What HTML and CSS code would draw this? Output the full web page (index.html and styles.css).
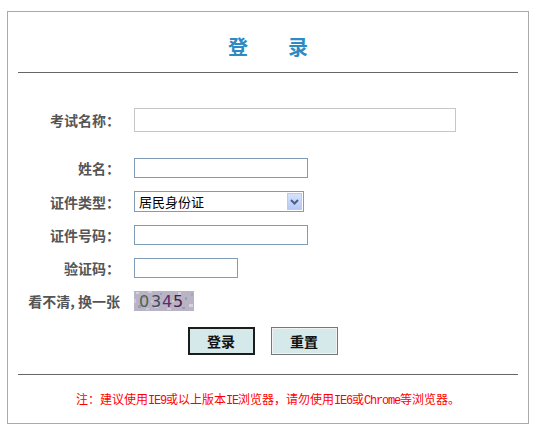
FILE: index.html
```html
<!DOCTYPE html>
<html lang="zh-CN">
<head>
    <meta charset="UTF-8">
    <meta name="viewport" content="width=device-width, initial-scale=1.0">
    <title>登录</title>
    <link rel="stylesheet" href="styles.css">
</head>
<body>
    <div class="login-box">
        <!-- 标题 -->
        <h2 class="title"><span>登</span><span>录</span></h2>
        <div class="line"></div>

        <form class="login-form" action="javascript:;">
            <div class="row row-exam">
                <label>考试名称：</label>
                <input class="ipt ipt-exam" type="text">
            </div>
            <div class="row">
                <label>姓名：</label>
                <input class="ipt ipt-long" type="text">
            </div>
            <div class="row">
                <label>证件类型：</label>
                <div class="select-wrap">
                    <select class="sel">
                        <option>居民身份证</option>
                        <option>护照</option>
                        <option>军官证</option>
                    </select>
                    <!-- 仿xp下拉按钮 -->
                    <span class="sel-btn">
                        <svg width="9" height="6" viewBox="0 0 9 6"><path d="M1 1 L4.5 4.5 L8 1" fill="none" stroke="#4d5f86" stroke-width="2"/></svg>
                    </span>
                </div>
            </div>
            <div class="row">
                <label>证件号码：</label>
                <input class="ipt ipt-long" type="text">
            </div>
            <div class="row">
                <label>验证码：</label>
                <input class="ipt ipt-code" type="text">
            </div>
            <div class="row">
                <label class="refresh">看不清, 换一张</label>
                <svg class="captcha" width="60" height="20" viewBox="0 0 60 20">
                    <rect width="60" height="20" fill="#b8b3c5"/>
                    <rect x="2" y="1" width="3" height="2" fill="#d6d1de"/>
                    <rect x="9" y="4" width="2" height="3" fill="#9d98ad"/>
                    <rect x="14" y="0" width="4" height="2" fill="#cfc9d8"/>
                    <rect x="21" y="15" width="3" height="2" fill="#d9d4e1"/>
                    <rect x="26" y="2" width="2" height="2" fill="#a39eb2"/>
                    <rect x="33" y="17" width="4" height="2" fill="#cec8d7"/>
                    <rect x="44" y="1" width="3" height="3" fill="#d4cedc"/>
                    <rect x="51" y="6" width="2" height="3" fill="#a19cb0"/>
                    <rect x="55" y="13" width="4" height="3" fill="#d7d2df"/>
                    <rect x="4" y="14" width="3" height="3" fill="#a09bb0"/>
                    <rect x="0" y="8" width="2" height="4" fill="#ccc6d6"/>
                    <rect x="48" y="16" width="3" height="2" fill="#9f9aae"/>
                    <rect x="38" y="9" width="2" height="2" fill="#d2ccdb"/>
                    <rect x="17" y="9" width="2" height="3" fill="#c9c3d3"/>
                    <rect x="57" y="2" width="2" height="3" fill="#a9a4b7"/>
                    <rect x="12" y="17" width="3" height="2" fill="#cdc7d6"/>
                    <text x="5" y="16" fill="#4d6650" font-family="DejaVu Sans, sans-serif" font-size="16">0</text>
                    <text x="17" y="16" fill="#3d4a5c" font-family="DejaVu Sans, sans-serif" font-size="16">3</text>
                    <text x="28" y="16" fill="#5b2a6b" font-family="DejaVu Sans, sans-serif" font-size="16">4</text>
                    <text x="39" y="16" fill="#47213f" font-family="DejaVu Sans, sans-serif" font-size="16">5</text>
                </svg>
            </div>
            <div class="btns">
                <button class="btn btn-active" type="submit">登录</button>
                <button class="btn" type="reset">重置</button>
            </div>
        </form>

        <div class="line line-bottom"></div>
        <p class="note">注：建议使用<span class="en">IE9</span>或以上版本<span class="en">IE</span>浏览器，请勿使用<span class="en">IE6</span>或<span class="en">Chrome</span>等浏览器。</p>
    </div>
</body>
</html>
```

FILE: styles.css
```css
body {
    margin: 0;
    padding: 0;
    background-color: #fff;
    font-family: "Noto Sans CJK SC", "Liberation Sans", sans-serif;
}
.login-box {
    margin: 11px 7px;
    width: 522px;
    box-sizing: border-box;
    border: 1px solid #aaa;
    padding: 23px 10px 14px;
}
.title {
    display: flex;
    justify-content: center;
    gap: 40px;
    margin: 0;
    font-size: 20px;
    line-height: 24px;
    font-weight: bold;
    color: #2b8bc2;
}
.line {
    margin-top: 13px;
    height: 1px;
    background-color: #666;
}
.login-form {
    margin: 35px 0 0;
    display: flex;
    flex-direction: column;
    gap: 13px;
}
.row {
    display: flex;
    align-items: center;
}
.row-exam {
    margin-bottom: 13px;
}
.row label {
    width: 102px;
    margin-right: 14px;
    text-align: right;
    white-space: nowrap;
    font-size: 14px;
    line-height: 20px;
    font-weight: bold;
    color: #555;
}
.ipt {
    box-sizing: border-box;
    height: 20px;
    margin: 0;
    padding: 1px 3px;
    border: 1px solid #7f9db9;
    font-size: 13px;
    outline: none;
}
.ipt-exam {
    width: 322px;
    height: 24px;
    border-color: #c6c6c6;
}
.ipt-long {
    width: 174px;
}
.ipt-code {
    width: 104px;
}
.select-wrap {
    position: relative;
    width: 170px;
    height: 21px;
}
.sel {
    display: block;
    width: 170px;
    height: 21px;
    box-sizing: border-box;
    margin: 0;
    padding: 0 0 0 4px;
    border: 1px solid #7f9db9;
    border-radius: 0;
    background-color: #fff;
    font-family: "Noto Sans CJK SC", sans-serif;
    font-size: 13px;
    line-height: 17px;
    color: #000;
    -webkit-appearance: none;
    appearance: none;
    outline: none;
}
/* 盖在select右侧的按钮 */
.sel-btn {
    position: absolute;
    top: 2px;
    right: 2px;
    width: 15px;
    height: 17px;
    box-sizing: border-box;
    border: 1px solid #b8cbf3;
    background: linear-gradient(#d6e2fd, #b6c9f6);
    display: flex;
    align-items: center;
    justify-content: center;
    pointer-events: none;
}
.captcha {
    display: block;
}
.btns {
    display: flex;
    justify-content: center;
    gap: 16px;
    padding-right: 11px;
    margin-top: 3px;
}
.btn {
    width: 67px;
    height: 28px;
    margin: 0;
    padding: 0;
    border: 1px solid #777;
    box-shadow: inset 0 0 0 1px #f2f2f2;
    background-color: #d5e8ea;
    font-family: "Noto Sans CJK SC", sans-serif;
    font-size: 14px;
    font-weight: bold;
    color: #111;
    cursor: pointer;
}
.btn-active {
    border: 2px solid #1c1c1c;
    box-shadow: none;
}
.line-bottom {
    margin-top: 19px;
}
.note {
    margin: 16px 0 0;
    text-align: center;
    font-size: 12px;
    line-height: 16px;
    color: #f00;
}
.note .en {
    font-family: "Liberation Mono", monospace;
    font-size: 12px;
    letter-spacing: -1.2px;
}
```
